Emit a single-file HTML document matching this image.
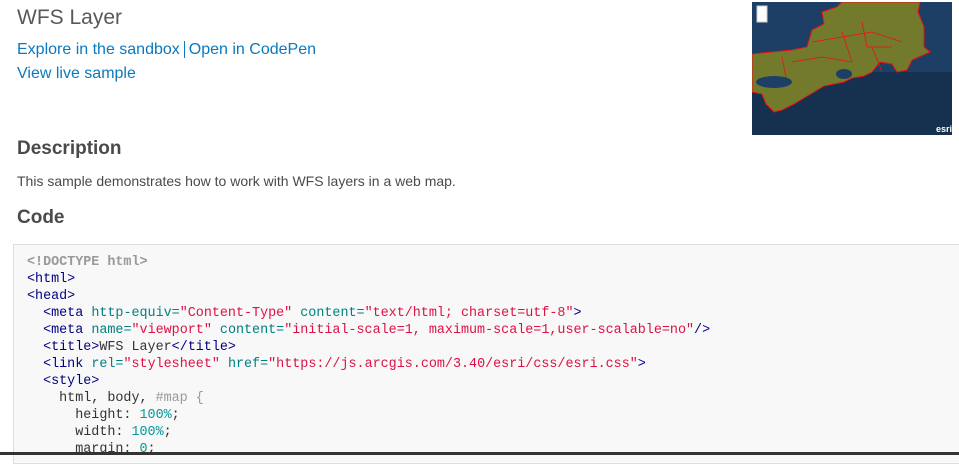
<!DOCTYPE html>
<html><head><meta charset="utf-8"><style>
body{margin:0;width:959px;height:455px;overflow:hidden;background:#fff;font-family:"Liberation Sans",sans-serif;position:relative}
h1{position:absolute;left:17px;top:6px;margin:0;font-weight:normal;font-size:21px;color:#595959}
.l{position:absolute;left:17px;font-size:16px;color:#0a79bf}
.l a{color:#0a79bf;text-decoration:none}
h2{position:absolute;left:17px;margin:0;font-size:19px;color:#4a4a4a;font-weight:bold}
.d{position:absolute;left:17px;top:173px;font-size:14px;color:#4a4a4a}
.code{position:absolute;left:13px;top:244px;width:960px;height:220px;background:#f8f8f8;border:1px solid #ddd;box-sizing:border-box}
pre{margin:0;position:absolute;left:13px;top:9px;font-family:"Liberation Mono",monospace;font-size:13.4px;line-height:17px;color:#333}
.t{color:#000080}.a{color:#008080}.s{color:#d14}.c{color:#999;font-weight:bold}.n{color:#099}.g{color:#999}
.bar{position:absolute;left:0;top:452px;width:959px;height:3px;background:#333}
</style></head><body>
<h1>WFS Layer</h1>
<div class="l" style="top:41px"><a>Explore in the sandbox</a><span style="border-left:1px solid #0a79bf;margin:0 4px 0 4px;"></span><a>Open in CodePen</a></div>
<div class="l" style="top:65px"><a>View live sample</a></div>
<h2 style="top:138px">Description</h2>
<div class="d">This sample demonstrates how to work with WFS layers in a web map.</div>
<h2 style="top:207px">Code</h2>
<svg style="position:absolute;left:752px;top:2px" width="200" height="133" viewBox="0 0 200 133">
<rect width="200" height="133" fill="#1d3f66"/>
<rect y="70" width="200" height="63" fill="#15314f"/>
<path d="M0 52 L20 50 L40 48 L55 45 L60 28 L72 22 L70 10 L85 5 L90 0 L168 0 L166 10 L172 25 L172 45 L178 50 L160 58 L155 68 L145 70 L140 62 L128 60 L120 70 L112 74 L100 76 L92 80 L82 82 L72 84 L62 90 L52 96 L42 102 L30 108 L22 110 L14 102 L10 92 L0 90 Z" fill="#737a2c" stroke="#e11" stroke-width="1"/>
<path d="M60 40 L90 35 L120 30 L150 40 M40 60 L70 55 L100 60 M120 45 L130 70 M90 30 L100 60 M110 20 L115 45 L140 45 M30 55 L35 80" stroke="#e11" fill="none" stroke-width="0.8"/>
<ellipse cx="22" cy="80" rx="18" ry="6" fill="#1d3f66"/>
<ellipse cx="92" cy="72" rx="8" ry="5" fill="#1d3f66"/>
<rect x="5" y="4" width="10" height="16" fill="#fff" stroke="#ccc"/>
<text x="184" y="130" font-size="9" font-weight="bold" fill="#fff" font-family="Liberation Sans">esri</text>
</svg>
<div class="code"><pre><span class="c">&lt;!DOCTYPE html&gt;</span>
<span class="t">&lt;html&gt;</span>
<span class="t">&lt;head&gt;</span>
  <span class="t">&lt;meta</span> <span class="a">http-equiv=</span><span class="s">"Content-Type"</span> <span class="a">content=</span><span class="s">"text/html; charset=utf-8"</span><span class="t">&gt;</span>
  <span class="t">&lt;meta</span> <span class="a">name=</span><span class="s">"viewport"</span> <span class="a">content=</span><span class="s">"initial-scale=1, maximum-scale=1,user-scalable=no"</span><span class="t">/&gt;</span>
  <span class="t">&lt;title&gt;</span>WFS Layer<span class="t">&lt;/title&gt;</span>
  <span class="t">&lt;link</span> <span class="a">rel=</span><span class="s">"stylesheet"</span> <span class="a">href=</span><span class="s">"https://js.arcgis.com/3.40/esri/css/esri.css"</span><span class="t">&gt;</span>
  <span class="t">&lt;style&gt;</span>
    html, body, <span class="g">#map {</span>
      height: <span class="n">100%</span>;
      width: <span class="n">100%</span>;
      margin: <span class="n">0</span>;</pre></div>
<div class="bar"></div>
</body></html>
